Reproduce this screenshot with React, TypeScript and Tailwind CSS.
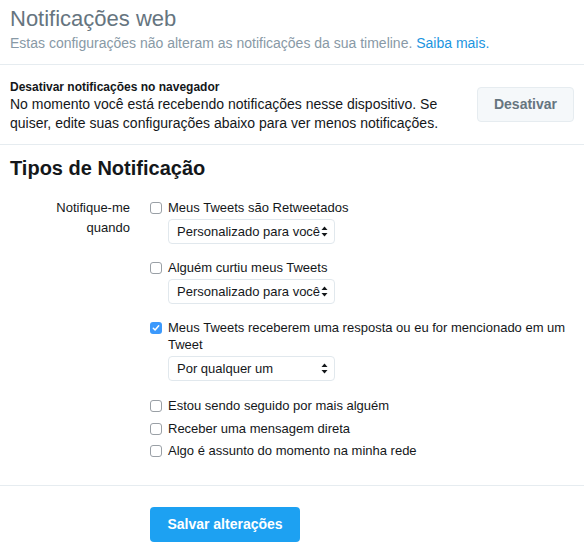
import React from "react";

function Arrows() {
  return (
    <svg width="7" height="11" viewBox="0 0 7 11" className="absolute right-[6px] top-[6px]">
      <path d="M3.5 0.5 L6.5 4 L0.5 4 Z" fill="#14171a" />
      <path d="M3.5 10.5 L6.5 7 L0.5 7 Z" fill="#14171a" />
    </svg>
  );
}

function Select({ value }: { value: string }) {
  return (
    <div className="relative ml-[18px] mt-[3px] w-[167px] h-[25px] border border-[#e1e8ed] rounded-[4px] bg-white text-[13px] text-[#14171a] leading-[23px] pl-[8px]">
      {value}
      <Arrows />
    </div>
  );
}

function Box({ checked }: { checked?: boolean }) {
  if (checked) {
    return (
      <span className="mt-[3px] w-[12px] h-[12px] rounded-[3px] bg-[#3b99fc] flex items-center justify-center shrink-0">
        <svg width="8" height="8" viewBox="0 0 8 8">
          <path d="M1.3 4.2 L3.1 6 L6.7 1.8" stroke="white" strokeWidth="1.5" fill="none" strokeLinecap="round" strokeLinejoin="round" />
        </svg>
      </span>
    );
  }
  return <span className="mt-[3px] w-[12px] h-[12px] rounded-[3px] border border-[#9aa0a6] bg-white shrink-0" />;
}

function Item({ label, checked }: { label: string; checked?: boolean }) {
  return (
    <div className="flex gap-[6px] text-[13px] leading-[17px] text-[#14171a]">
      <Box checked={checked} />
      <span>{label}</span>
    </div>
  );
}

export default function App() {
  return (
    <div className="w-[584px] h-[558px] bg-white overflow-hidden" style={{ fontFamily: '"Liberation Sans", Arial, sans-serif' }}>
      <div className="px-[10px] pt-[6px] pb-[12px] border-b border-[#e6ecf0]">
        <h1 className="text-[22px] leading-[26px] text-[#66757f] font-normal">Notificações web</h1>
        <p className="text-[14px] leading-[18px] text-[#8899a6] mt-[2px]">
          Estas configurações não alteram as notificações da sua timeline. <span className="text-[#1b95e0]">Saiba mais.</span>
        </p>
      </div>
      <div className="px-[10px] pt-[14px] pb-[11px] border-b border-[#e6ecf0] flex items-start justify-between">
        <div>
          <div className="text-[12px] leading-[16px] font-bold text-[#14171a]">Desativar notificações no navegador</div>
          <p className="text-[14px] leading-[19px] text-[#14171a] w-[440px]">
            No momento você está recebendo notificações nesse dispositivo. Se quiser, edite suas configurações abaixo para ver menos notificações.
          </p>
        </div>
        <button className="mt-[8px] w-[97px] h-[35px] rounded-[4px] border border-[#e6ecf0] bg-[#f5f8fa] text-[14px] font-bold text-[#66757f]">
          Desativar
        </button>
      </div>
      <div className="px-[10px] pt-[11px] border-b border-[#e6ecf0] pb-[26px]">
        <h2 className="text-[20px] leading-[24px] font-bold text-[#14171a]">Tipos de Notificação</h2>
        <div className="flex mt-[19px]">
          <div className="w-[120px] shrink-0 text-right text-[13px] leading-[20px] text-[#14171a] -mt-[1px]">
            Notifique-me
            <br />
            quando
          </div>
          <div className="ml-[20px] flex flex-col">
            <Item label="Meus Tweets são Retweetados" />
            <Select value="Personalizado para você" />
            <div className="mt-[15px]" />
            <Item label="Alguém curtiu meus Tweets" />
            <Select value="Personalizado para você" />
            <div className="mt-[15px]" />
            <Item label="Meus Tweets receberem uma resposta ou eu for mencionado em um Tweet" checked />
            <Select value="Por qualquer um" />
            <div className="mt-[16px]" />
            <Item label="Estou sendo seguido por mais alguém" />
            <div className="mt-[6px]" />
            <Item label="Receber uma mensagem direta" />
            <div className="mt-[5px]" />
            <Item label="Algo é assunto do momento na minha rede" />
          </div>
        </div>
      </div>
      <div className="pl-[150px] pt-[21px]">
        <button className="w-[150px] h-[35px] rounded-[4px] bg-[#1da1f2] text-white text-[14px] font-bold">
          Salvar alterações
        </button>
      </div>
    </div>
  );
}
